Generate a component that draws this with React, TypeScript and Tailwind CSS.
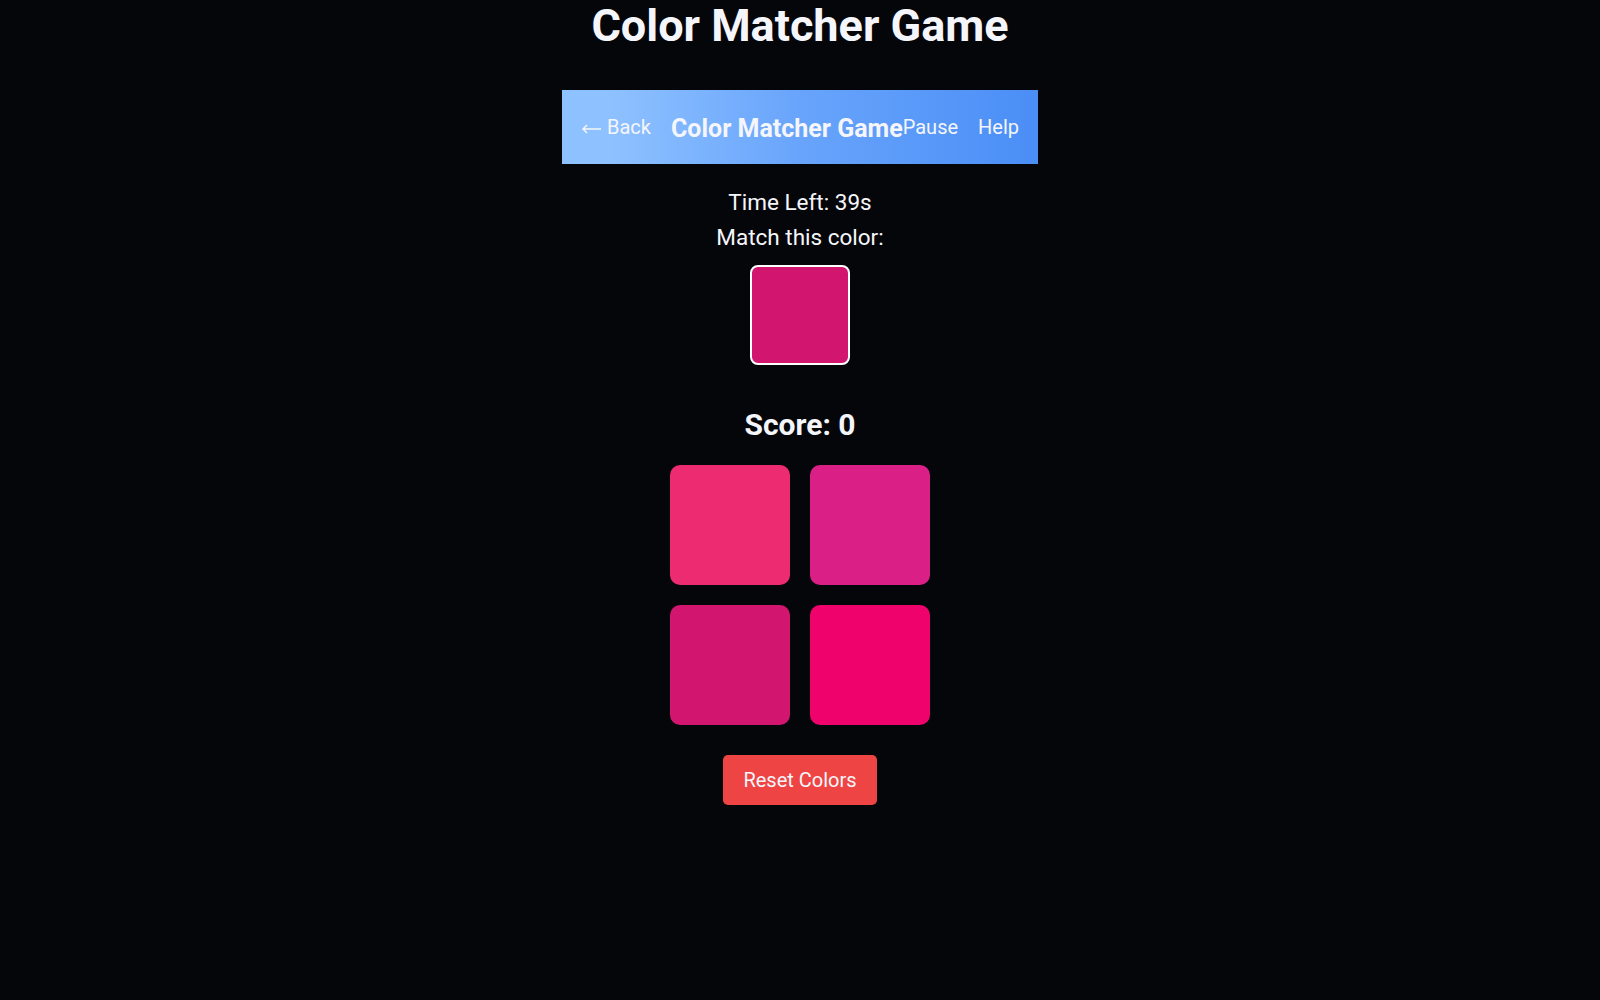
import { useState } from 'react'

const tiles = ['#ed2b71', '#da2087', '#d2166f', '#f0026c']

export default function App() {
  const [score] = useState(0)
  const target = '#d2166f'

  return (
    <div className="min-h-screen bg-[#05060a] text-[#f5f6fb] font-['Roboto','Liberation_Sans',sans-serif]">
      <div className="flex flex-col items-center">
        <h1 className="text-[45px] font-bold leading-[1.16]">Color Matcher Game</h1>

        <nav className="mt-[38px] flex h-[74px] w-[476px] items-center whitespace-nowrap bg-gradient-to-r from-[#8ec1ff] from-10% via-[#68a4fb] to-[#4a8ef6] px-5 text-[20px]">
          <button type="button" className="mr-5 flex shrink-0 items-center">
            <svg
              width="19"
              height="10"
              viewBox="0 0 19 10"
              fill="none"
              stroke="currentColor"
              strokeWidth="1.5"
              className="mr-1.5 mt-[3px]"
              aria-hidden
            >
              <path d="M1 5h18M5 1L1 5l4 4" />
            </svg>
            Back
          </button>
          <h2 className="mt-[3px] shrink-0 text-[25px] font-bold">Color Matcher Game</h2>
          <button type="button" className="shrink-0">Pause</button>
          <button type="button" className="ml-5 shrink-0">Help</button>
        </nav>

        <p className="mt-6 text-[22.5px] leading-7">Time Left: 39s</p>
        <p className="mt-[7px] text-[22.5px] leading-7">Match this color:</p>
        <div
          className="mt-[14px] size-[100px] rounded-lg border-2 border-white"
          style={{ background: target }}
        />

        <h2 className="mt-[42px] text-[30px] font-bold leading-9">Score: {score}</h2>

        <div className="mt-[22px] grid grid-cols-2 gap-5">
          {tiles.map((c) => (
            <button
              key={c}
              type="button"
              className="size-[120px] rounded-[10px]"
              style={{ background: c }}
            />
          ))}
        </div>

        <button
          type="button"
          className="mt-[30px] h-[50px] w-[154px] rounded-[5px] bg-[#ef4444] text-[20px]"
        >
          Reset Colors
        </button>
      </div>
    </div>
  )
}
